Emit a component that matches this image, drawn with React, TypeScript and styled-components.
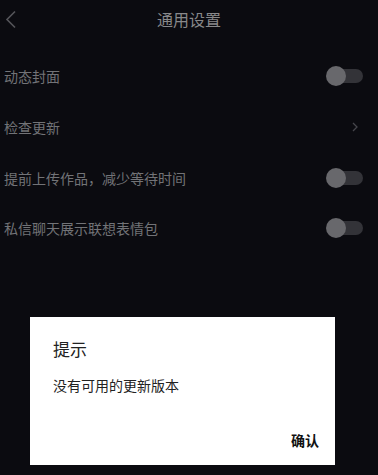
import styled, { createGlobalStyle } from 'styled-components';

const GlobalStyle = createGlobalStyle`
  html, body {
    margin: 0;
    padding: 0;
    background: #0b0b10;
    font-family: "Noto Sans CJK SC", "Noto Sans", sans-serif;
  }
`;

const Page = styled.div`
  width: 378px;
  height: 475px;
  background: #0b0b10;
  overflow: hidden;
  position: relative;
`;

const Header = styled.div`
  height: 38px;
  display: flex;
  align-items: center;
  justify-content: center;
  position: relative;
`;

const BackButton = styled.div`
  position: absolute;
  left: 5px;
  top: 10px;
  width: 12px;
  height: 19px;
  display: flex;
`;

const Title = styled.h1`
  margin: 0;
  font-size: 16px;
  font-weight: 400;
  color: #88888a;
  line-height: 1;
`;

const List = styled.div`
  padding-top: 13px;
  display: flex;
  flex-direction: column;
`;

const Row = styled.div`
  height: 50.7px;
  display: flex;
  align-items: center;
  justify-content: space-between;
  padding: 0 15px 0 4px;
`;

const Label = styled.span`
  font-size: 14px;
  color: #727377;
  line-height: 1;
`;

const Track = styled.div`
  position: relative;
  width: 36px;
  height: 14px;
  border-radius: 7px;
  background: #333338;
`;

const Knob = styled.div`
  position: absolute;
  left: -1px;
  top: -3px;
  width: 20px;
  height: 20px;
  border-radius: 50%;
  background: #68686c;
`;

const Dialog = styled.div`
  position: absolute;
  left: 30px;
  top: 317px;
  width: 305px;
  height: 148px;
  background: #ffffff;
  box-sizing: border-box;
  padding: 22px 16px 0 23px;
  display: flex;
  flex-direction: column;
`;

const DialogTitle = styled.div`
  font-size: 17px;
  color: #222;
  line-height: 20px;
`;

const DialogText = styled.div`
  margin-top: 16px;
  font-size: 14px;
  color: #222;
  line-height: 20px;
`;

const DialogActions = styled.div`
  margin-top: auto;
  height: 35px;
  display: flex;
  justify-content: flex-end;
  align-items: flex-start;
`;

const ConfirmButton = styled.span`
  font-size: 14px;
  font-weight: 700;
  color: #111;
  line-height: 20px;
`;

type Item = { label: string; kind: 'toggle' | 'link' };

const items: Item[] = [
  { label: '动态封面', kind: 'toggle' },
  { label: '检查更新', kind: 'link' },
  { label: '提前上传作品，减少等待时间', kind: 'toggle' },
  { label: '私信聊天展示联想表情包', kind: 'toggle' },
];

const Toggle = () => (
  <Track>
    <Knob />
  </Track>
);

const Chevron = () => (
  <svg width="6" height="10" viewBox="0 0 6 10" style={{ marginRight: 5 }}>
    <path d="M1 1l4 4-4 4" fill="none" stroke="#46464b" strokeWidth="1.3" />
  </svg>
);

const App = () => {
  return (
    <>
      <GlobalStyle />
      <Page>
        <Header>
          <BackButton>
            <svg width="12" height="19" viewBox="0 0 12 19">
              <path d="M10 1.5L2 9.5l8 8" fill="none" stroke="#55555a" strokeWidth="1.6" />
            </svg>
          </BackButton>
          <Title>通用设置</Title>
        </Header>
        <List>
          {items.map((item) => (
            <Row key={item.label}>
              <Label>{item.label}</Label>
              {item.kind === 'toggle' ? <Toggle /> : <Chevron />}
            </Row>
          ))}
        </List>
        <Dialog>
          <DialogTitle>提示</DialogTitle>
          <DialogText>没有可用的更新版本</DialogText>
          <DialogActions>
            <ConfirmButton>确认</ConfirmButton>
          </DialogActions>
        </Dialog>
      </Page>
    </>
  );
};

export default App;
